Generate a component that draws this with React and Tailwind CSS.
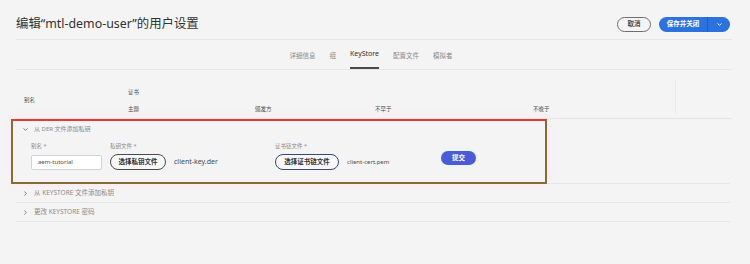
import React from "react";
import { ChevronDown, ChevronRight } from "lucide-react";

const tabs = ["详细信息", "组", "KeyStore", "配置文件", "模拟者"];

function Accordion({ title }) {
  return (
    <div className="flex h-[19px] items-center border-b border-[#e6e6e6] pl-[6px] text-[6.5px] text-[#8a8a8a]">
      <ChevronRight size={7} strokeWidth={3} className="mr-[5px] text-[#6e6e6e]" />
      <span>{title}</span>
    </div>
  );
}

export default function App() {
  return (
    <div className="h-[264px] w-[750px] overflow-hidden bg-[#f4f4f4] font-['Noto_Sans','Noto_Sans_CJK_SC',sans-serif] text-[#4b4b4b]">
      {/* header */}
      <div className="ml-4 mr-[18px] flex h-[40px] items-center justify-between border-b border-[#e6e6e6] pt-[9px]">
        <h1 className="text-[12.4px] leading-none text-[#323232]">编辑“mtl-demo-user”的用户设置</h1>
        <div className="flex items-center gap-[8px] pr-[2px]">
          <button className="flex h-[15px] w-[34px] items-center justify-center rounded-full border border-[#6e6e6e] text-[6.5px] font-bold text-[#4b4b4b]">
            取消
          </button>
          <div className="flex h-[15px] items-center overflow-hidden rounded-full bg-[#2b72de] text-white">
            <span className="flex h-full w-[49px] items-center justify-center border-r border-[#1f5fc0] text-[6.5px] font-bold">保存并关闭</span>
            <span className="flex h-full w-[22px] items-center justify-center">
              <ChevronDown size={7} strokeWidth={3} />
            </span>
          </div>
        </div>
      </div>

      {/* tabs */}
      <div className="ml-4 mr-[18px] flex h-[30px] justify-center gap-[14px] border-b border-[#e6e6e6] pr-[6px]">
        {tabs.map((t) => (
          <div
            key={t}
            className={
              t === "KeyStore"
                ? "flex items-center border-b-2 border-[#4b4b4b] pt-[2px] text-[7px] text-[#323232]"
                : "flex items-center pt-[2px] text-[6.5px] text-[#8a8a8a]"
            }
          >
            {t}
          </div>
        ))}
      </div>

      {/* table header */}
      <div className="ml-4 mr-[18px] flex h-[49px] border-b border-[#e6e6e6] text-[5.5px] text-[#4b4b4b]">
        <div className="flex w-[112px] shrink-0 items-center pl-[8px] pt-[12px]">别名</div>
        <div className="flex flex-1 flex-col">
          <div className="flex h-[30px] items-center pt-[14px]">证书</div>
          <div className="flex flex-1 items-center">
            <span className="w-[127px] shrink-0">主题</span>
            <span className="w-[120px] shrink-0">颁发方</span>
            <span className="w-[158px] shrink-0">不早于</span>
            <span className="w-[142px] shrink-0">不晚于</span>
            <span className="-mt-[24px] h-[34px] border-l border-[#e9e9e9]"></span>
          </div>
        </div>
      </div>

      {/* accordion rows */}
      <div className="ml-4 mr-[20px]">
        <div className="h-[65px] border-b border-[#e6e6e6]">
          <div className="-ml-[5px] h-[65px] w-[536px] border-2 border-[#8a6b34] border-t-[#e53935] bg-[#f4f4f4] shadow-[0_0_10px_#fde6ef]">
            <div className="flex h-[13px] items-center pl-[9px] pt-[3px] text-[6px] text-[#8a8a8a]">
              <ChevronDown size={7} strokeWidth={3} className="mr-[5px] text-[#6e6e6e]" />
              从 DER 文件添加私钥
            </div>
            <div className="mt-[8px] flex items-end text-[5.5px] text-[#8a8a8a]">
              <div className="ml-[18px] flex w-[79px] flex-col">
                <span className="mb-[5px]">别名 *</span>
                <div className="flex h-[15px] w-[71px] items-center rounded-[2px] border border-[#d3d3d3] bg-white pl-[6px] text-[6px] text-[#4b4b4b]">
                  aem-tutorial
                </div>
              </div>
              <div className="flex w-[165px] flex-col">
                <span className="mb-[4px]">私钥文件 *</span>
                <div className="flex items-center">
                  <button className="flex h-[16px] w-[56px] items-center justify-center rounded-full border-[1.5px] border-[#4b4b4b] bg-[#f8f8f8] text-[6.5px] font-bold text-[#323232]">
                    选择私钥文件
                  </button>
                  <span className="ml-[8px] text-[7px] text-[#4b4b4b]">client-key.der</span>
                </div>
              </div>
              <div className="flex w-[166px] flex-col">
                <span className="mb-[4px]">证书链文件 *</span>
                <div className="flex items-center">
                  <button className="flex h-[16px] w-[64px] items-center justify-center rounded-full border-[1.5px] border-[#3a4679] bg-[#f8f8f8] text-[6.5px] font-bold text-[#323232]">
                    选择证书链文件
                  </button>
                  <span className="ml-[8px] text-[6px] text-[#4b4b4b]">client-cert.pem</span>
                </div>
              </div>
              <button className="mb-[5px] flex h-[14px] w-[35px] items-center justify-center rounded-full bg-[#4b5bd6] text-[6.5px] font-bold text-white shadow-[0_0_4px_#d8f6f6]">
                提交
              </button>
            </div>
          </div>
        </div>
        <Accordion title="从 KEYSTORE 文件添加私钥" />
        <Accordion title="更改 KEYSTORE 密码" />
      </div>
    </div>
  );
}
